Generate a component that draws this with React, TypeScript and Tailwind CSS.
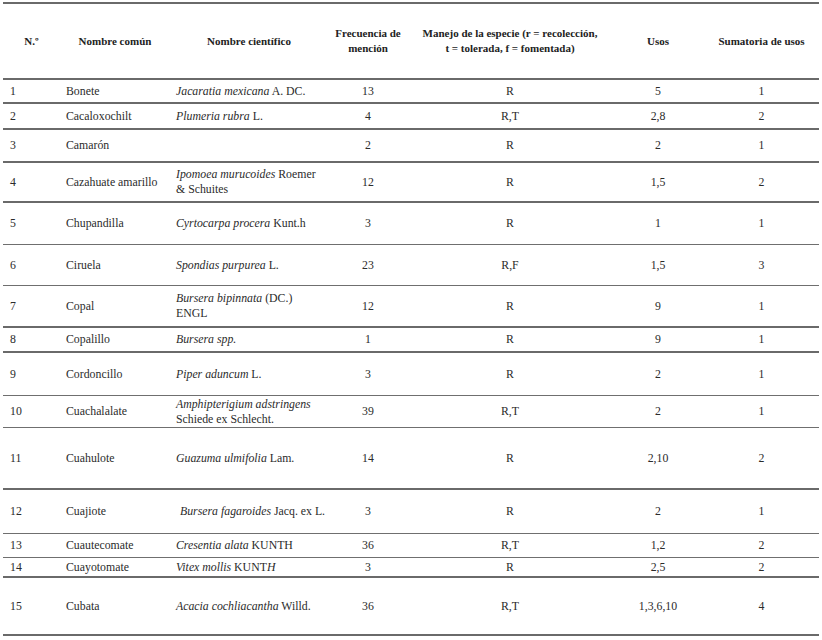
import React from "react";

type Row = {
  n: string;
  comun: string;
  cientifico: React.ReactNode;
  frec: string;
  manejo: string;
  usos: string;
  suma: string;
  h: string;
  line: string;
  indent?: boolean;
};

const thick = "border-b-2 border-[#6a6a6a]";
const thin = "border-b border-[#6f6f6f]";

const rows: Row[] = [
  { n: "1", comun: "Bonete", cientifico: <><i>Jacaratia mexicana</i> A. DC.</>, frec: "13", manejo: "R", usos: "5", suma: "1", h: "h-[24px]", line: thick },
  { n: "2", comun: "Cacaloxochilt", cientifico: <><i>Plumeria rubra</i> L.</>, frec: "4", manejo: "R,T", usos: "2,8", suma: "2", h: "h-[26px]", line: thick },
  { n: "3", comun: "Camarón", cientifico: "", frec: "2", manejo: "R", usos: "2", suma: "1", h: "h-[33px]", line: thick },
  { n: "4", comun: "Cazahuate amarillo", cientifico: <><i>Ipomoea murucoides</i> Roemer<br />&amp; Schuites</>, frec: "12", manejo: "R", usos: "1,5", suma: "2", h: "h-[40px]", line: thick },
  { n: "5", comun: "Chupandilla", cientifico: <><i>Cyrtocarpa procera</i> Kunt.h</>, frec: "3", manejo: "R", usos: "1", suma: "1", h: "h-[42px]", line: thin },
  { n: "6", comun: "Ciruela", cientifico: <><i>Spondias purpurea</i> L.</>, frec: "23", manejo: "R,F", usos: "1,5", suma: "3", h: "h-[41px]", line: thin },
  { n: "7", comun: "Copal", cientifico: <><i>Bursera bipinnata</i> (DC.)<br />ENGL</>, frec: "12", manejo: "R", usos: "9", suma: "1", h: "h-[42px]", line: thick },
  { n: "8", comun: "Copalillo", cientifico: <i>Bursera spp.</i>, frec: "1", manejo: "R", usos: "9", suma: "1", h: "h-[25px]", line: thick },
  { n: "9", comun: "Cordoncillo", cientifico: <><i>Piper aduncum</i> L.</>, frec: "3", manejo: "R", usos: "2", suma: "1", h: "h-[43px]", line: thin },
  { n: "10", comun: "Cuachalalate", cientifico: <><i>Amphipterigium adstringens</i><br />Schiede ex Schlecht.</>, frec: "39", manejo: "R,T", usos: "2", suma: "1", h: "h-[32px]", line: thin },
  { n: "11", comun: "Cuahulote", cientifico: <><i>Guazuma ulmifolia</i> Lam.</>, frec: "14", manejo: "R", usos: "2,10", suma: "2", h: "h-[62px]", line: thick },
  { n: "12", comun: "Cuajiote", cientifico: <><i>Bursera fagaroides</i> Jacq. ex L.</>, frec: "3", manejo: "R", usos: "2", suma: "1", h: "h-[44px]", line: thin, indent: true },
  { n: "13", comun: "Cuautecomate", cientifico: <><i>Cresentia alata</i> KUNTH</>, frec: "36", manejo: "R,T", usos: "1,2", suma: "2", h: "h-[24px]", line: thin },
  { n: "14", comun: "Cuayotomate", cientifico: <><i>Vitex mollis</i> KUNT<i>H</i></>, frec: "3", manejo: "R", usos: "2,5", suma: "2", h: "h-[20px]", line: thick },
  { n: "15", comun: "Cubata", cientifico: <><i>Acacia cochliacantha</i> Willd.</>, frec: "36", manejo: "R,T", usos: "1,3,6,10", suma: "4", h: "h-[58px]", line: thick },
];

const cols = "grid grid-cols-[57px_110px_158px_80px_204px_92px_115px]";

export default function App() {
  return (
    <div className="w-[822px] h-[640px] bg-white pt-[2px] pl-[3px] [font-family:'Liberation_Serif','Times_New_Roman',serif] text-[#2b2b2b]">
      <div className="w-[816px]">
        <div className={`${cols} h-[78px] items-center border-t-2 border-b-2 border-[#6a6a6a] text-[11px] font-bold leading-[15px] text-[#222] text-center`}>
          <div>N.º</div>
          <div>Nombre común</div>
          <div>Nombre científico</div>
          <div>Frecuencia de<br />mención</div>
          <div>Manejo de la especie (r = recolección,<br />t = tolerada, f = fomentada)</div>
          <div>Usos</div>
          <div>Sumatoria de usos</div>
        </div>

        {rows.map((r) => (
          <div key={r.n} className={`${cols} ${r.h} ${r.line} items-center text-[11.8px] leading-[15px]`}>
            <div className="pl-[7px]">{r.n}</div>
            <div className="pl-[6px] whitespace-nowrap">{r.comun}</div>
            <div className={r.indent ? "pl-[10px] whitespace-nowrap" : "pl-[6px] whitespace-nowrap"}>{r.cientifico}</div>
            <div className="text-center">{r.frec}</div>
            <div className="text-center">{r.manejo}</div>
            <div className="text-center">{r.usos}</div>
            <div className="text-center">{r.suma}</div>
          </div>
        ))}
      </div>
    </div>
  );
}
